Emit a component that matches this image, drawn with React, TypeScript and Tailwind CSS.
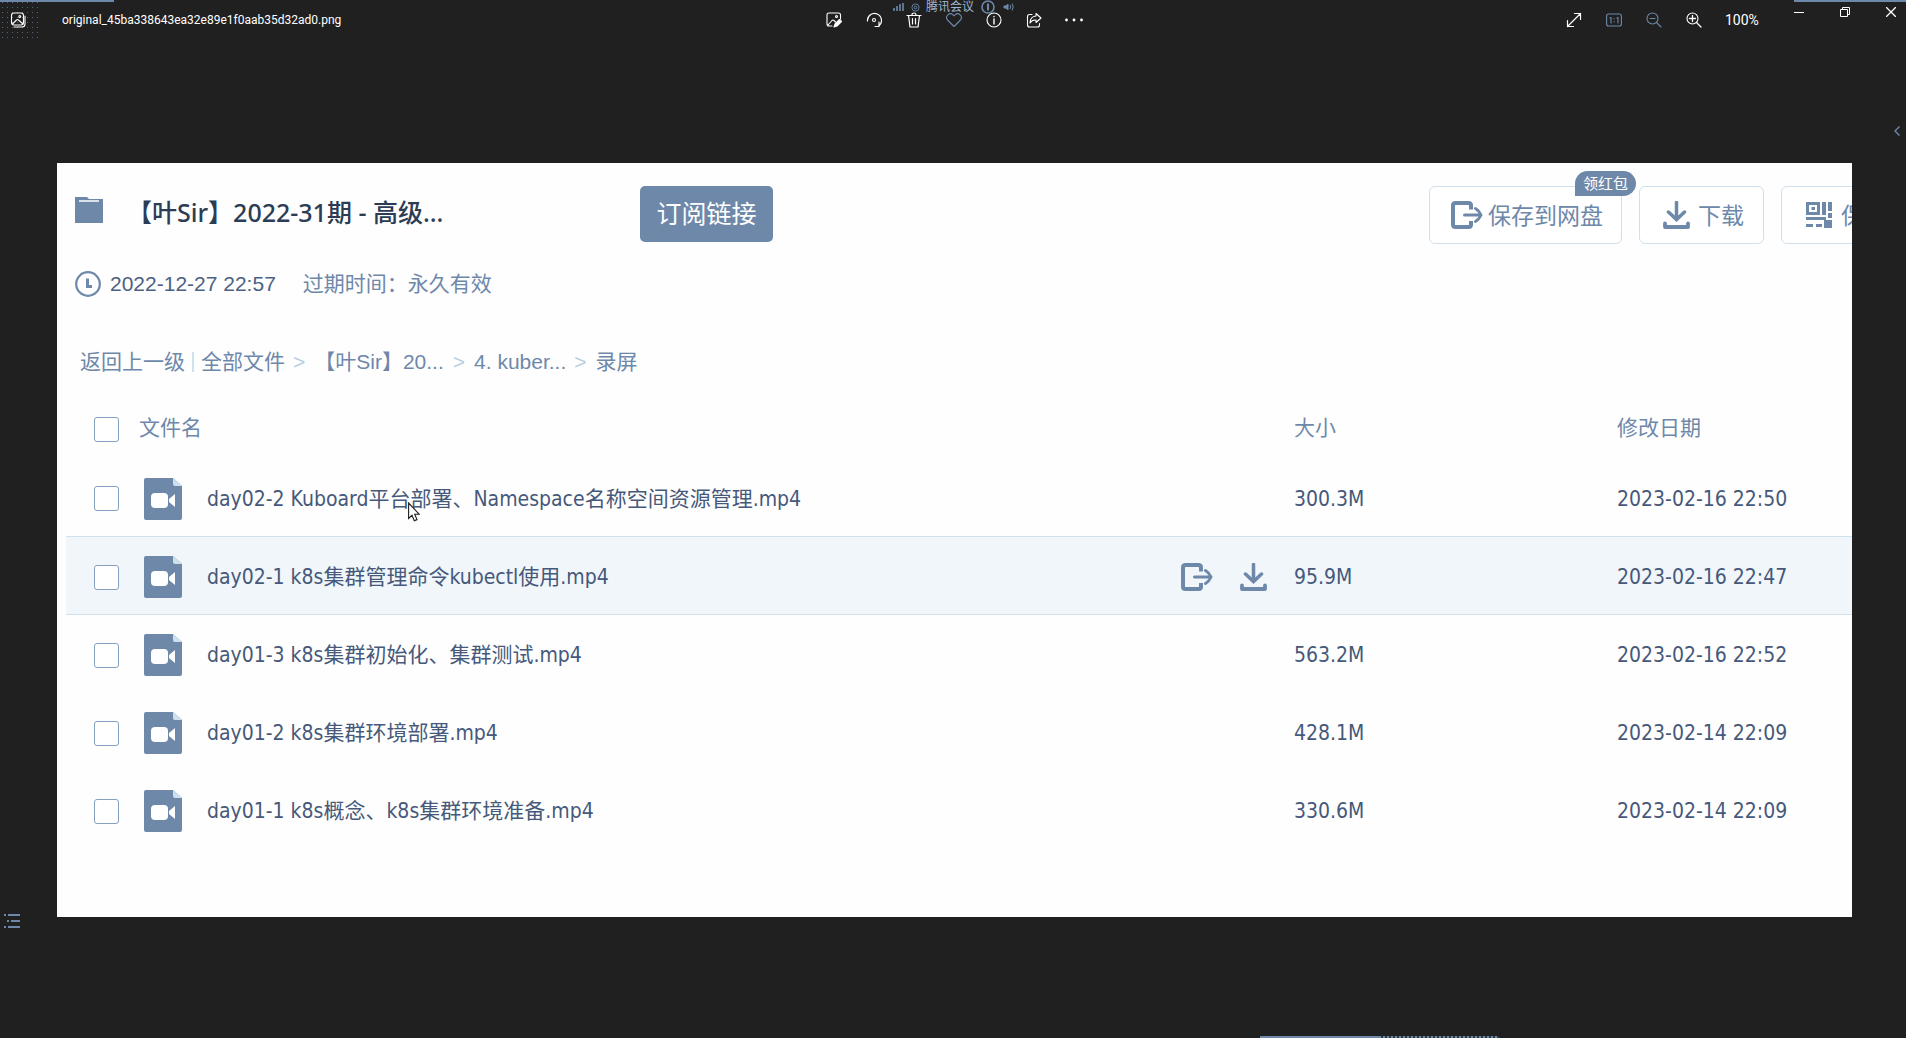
import React from "react";

const UI = "font-['Noto_Sans','Noto_Sans_CJK_SC',sans-serif]";
const ARIAL = "font-['Liberation_Sans','Noto_Sans_CJK_SC',sans-serif]";
const TABLE = "font-['DejaVu_Sans_Condensed','Noto_Sans_CJK_SC',sans-serif]";
const BAR = "font-['Roboto','Noto_Sans_CJK_SC',sans-serif]";

const files = [
  { name: "day02-2 Kuboard平台部署、Namespace名称空间资源管理.mp4", size: "300.3M", date: "2023-02-16 22:50", active: false },
  { name: "day02-1 k8s集群管理命令kubectl使用.mp4", size: "95.9M", date: "2023-02-16 22:47", active: true },
  { name: "day01-3 k8s集群初始化、集群测试.mp4", size: "563.2M", date: "2023-02-16 22:52", active: false },
  { name: "day01-2 k8s集群环境部署.mp4", size: "428.1M", date: "2023-02-14 22:09", active: false },
  { name: "day01-1 k8s概念、k8s集群环境准备.mp4", size: "330.6M", date: "2023-02-14 22:09", active: false },
];

function Line({ children, className = "size-4" }: { children: React.ReactNode; className?: string }) {
  return (
    <svg viewBox="0 0 16 16" fill="none" stroke="currentColor" strokeWidth="1.1" strokeLinecap="round" strokeLinejoin="round" className={className}>
      {children}
    </svg>
  );
}

function ToolButton({ label, dim, children }: { label: string; dim?: boolean; children: React.ReactNode }) {
  return (
    <button aria-label={label} className={`flex h-10 w-10 items-center justify-center ${dim ? "text-[#6e88aa]" : "text-white"}`}>
      {children}
    </button>
  );
}

function SaveIcon({ className }: { className: string }) {
  return (
    <svg viewBox="0 0 32 28" fill="none" stroke="currentColor" className={className}>
      <path d="M20 8.500V4.500Q20 2 17.500 2H4.500Q2 2 2 4.500V23.500Q2 26 4.500 26H17.500Q20 26 20 23.500V20" strokeWidth="4" />
      <path d="M13.500 14H29" strokeWidth="3" strokeLinecap="round" />
      <path d="M24.500 7.500Q28 9.500 30 14Q28 18.500 24.500 20.500" strokeWidth="3" strokeLinecap="round" />
    </svg>
  );
}

function DownloadIcon({ className }: { className: string }) {
  return (
    <svg viewBox="0 0 27 28" fill="none" stroke="currentColor" className={className}>
      <path d="M13.500 1.500V18M5.500 11L13.500 18.500L21.500 11" strokeWidth="3.500" strokeLinecap="round" />
      <path d="M2 22.500V26H25V22.500" strokeWidth="3.800" strokeLinecap="round" strokeLinejoin="round" />
    </svg>
  );
}

function QrIcon() {
  return (
    <svg viewBox="0 0 26 26" fill="currentColor" className="size-[26px] shrink-0">
      <path fillRule="evenodd" d="M0 0H14V13H0ZM3 3V10H11V3ZM5.500 5H9V8H5.500Z" />
      <path d="M16 0H20V13H16ZM22 0H26V9H22ZM22 11H26V16H22ZM0 15H16V18H0ZM0 22H7V25H0ZM10 22H16V25H10ZM18 18H26V26H18ZM16 15H20V18H16Z" />
    </svg>
  );
}

function VideoFileIcon() {
  return (
    <svg viewBox="0 0 38 42" className="h-[42px] w-[38px] shrink-0">
      <path d="M2 0H29L38 8V40Q38 42 36 42H2Q0 42 0 40V2Q0 0 2 0Z" fill="#6e88aa" />
      <path d="M29 0L38 8H31Q29 8 29 6Z" fill="#cfe1ec" />
      <rect x="7" y="15" width="17" height="15" rx="4" fill="#fff" />
      <path d="M25 21L31 16V29L25 24Z" fill="#fff" />
    </svg>
  );
}

function Check({ label }: { label: string }) {
  return (
    <input
      type="checkbox"
      aria-label={label}
      className="size-[25px] shrink-0 appearance-none rounded-[3px] border border-[#86a0c0] bg-white"
    />
  );
}

function TitleBar() {
  return (
    <header className={`relative grid h-10 shrink-0 grid-cols-[1fr_auto_1fr] text-white ${BAR}`}>
      <div className="flex items-center">
        <span className="flex h-10 w-[42px] shrink-0 items-center bg-[radial-gradient(#536680_0.7px,transparent_0.8px)] bg-[size:5px_5px] pl-[10px]">
          <Line>
            <rect x="1.500" y="1" width="12" height="12" rx="2.500" />
            <path d="M4 15H12Q15 15 15 12V4M2.500 12L6.500 8Q7.500 7 8.500 8L13 12" />
            <circle cx="9.800" cy="4.500" r="1" />
          </Line>
        </span>
        <span className="pl-5 text-[12px] leading-5">original_45ba338643ea32e89e1f0aab35d32ad0.png</span>
      </div>
      <nav aria-label="图片操作" className="flex pl-[2px]">
        <ToolButton label="编辑图像">
          <Line>
            <path d="M14.500 7V3Q14.500 1 12.500 1H3Q1 1 1 3V12Q1 14 3 14H6M2 13L6 8.500Q7 7.500 8 8.500L9.500 10" />
            <circle cx="10.500" cy="4.500" r="1" />
            <path d="M8 15L9 12L13.500 7.500L15.500 9.500L11 14Z" fill="currentColor" />
          </Line>
        </ToolButton>
        <ToolButton label="旋转">
          <Line>
            <path d="M1 9A7 7 0 1 1 12.500 13.800M12.500 10V14.500H8.500" strokeWidth="1.200" transform="translate(0.500 0)" />
            <circle cx="8" cy="8" r="1.500" />
          </Line>
        </ToolButton>
        <ToolButton label="删除">
          <Line>
            <path d="M1 3.500H15M2.500 3.500L4 15H12L13.500 3.500M6 3Q6 1 8 1Q10 1 10 3M6.500 6.500V12M9.500 6.500V12" strokeWidth="1.200" />
          </Line>
        </ToolButton>
        <ToolButton label="收藏" dim>
          <Line>
            <path d="M8 14.500L1.500 8A3.800 3.800 0 0 1 7 2.800L8 3.800L9 2.800A3.800 3.800 0 0 1 14.500 8Z" />
          </Line>
        </ToolButton>
        <ToolButton label="信息">
          <Line>
            <circle cx="8" cy="8" r="7" />
            <path d="M8 7V12M8 4.500V4.700" strokeWidth="1.400" />
          </Line>
        </ToolButton>
        <ToolButton label="共享">
          <Line>
            <path d="M6 2.500H3.500Q1.500 2.500 1.500 4.500V13Q1.500 15 3.500 15H11.500Q13.500 15 13.500 13V11.500" />
            <path d="M10 1.500L15 6L10 10.500V8Q6 7.500 4 11Q4.200 4.500 10 4Z" />
          </Line>
        </ToolButton>
        <ToolButton label="更多">
          <svg viewBox="0 0 18 4" fill="currentColor" className="h-1 w-[18px]">
            <circle cx="1.500" cy="2" r="1.400" />
            <circle cx="9" cy="2" r="1.400" />
            <circle cx="16.500" cy="2" r="1.400" />
          </svg>
        </ToolButton>
      </nav>
      <div className="flex justify-end">
        <ToolButton label="全屏">
          <Line>
            <path d="M1.500 14.500L14.500 1.500M8.500 1.500H14.500V7.500M1.500 8.500V14.500H7.500" strokeWidth="1.200" />
          </Line>
        </ToolButton>
        <ToolButton label="实际大小" dim>
          <Line>
            <rect x="0.600" y="2" width="14.800" height="12" rx="2" />
            <path d="M4 6L5 5.500V11M11 6L12 5.500V11M8 6.500V6.700M8 9.500V9.700" />
          </Line>
        </ToolButton>
        <ToolButton label="缩小" dim>
          <Line>
            <circle cx="6.500" cy="6.500" r="5.500" />
            <path d="M4 6.500H9M10.500 10.500L15 15" />
          </Line>
        </ToolButton>
        <ToolButton label="放大">
          <Line>
            <circle cx="6.500" cy="6.500" r="5.500" />
            <path d="M3.500 6.500H9.500M6.500 3.500V9.500M10.500 10.500L15 15" strokeWidth="1.300" />
          </Line>
        </ToolButton>
        <span className="w-[62px] pl-[11px] text-[14px] leading-10">100%</span>
        <div className="flex h-6 w-[130px] justify-between pl-[18px] pr-[10px]">
          <button aria-label="最小化" className="flex items-center">
            <span className="h-px w-[10px] bg-white" />
          </button>
          <button aria-label="还原" className="flex items-center">
            <svg viewBox="0 0 10 10" fill="none" stroke="currentColor" className="size-[10px]">
              <path d="M0.500 2.500H7.500V9.500H0.500ZM2.500 2.500V0.500H9.500V7.500H7.500" />
            </svg>
          </button>
          <button aria-label="关闭" className="flex items-center">
            <svg viewBox="0 0 10 10" fill="none" stroke="currentColor" strokeWidth="1.300" className="size-[10px]">
              <path d="M0 0L10 10M10 0L0 10" />
            </svg>
          </button>
        </div>
      </div>
      <div className="absolute left-0 top-0 h-[2px] w-[114px] bg-[#6e88aa]" />
      <div className="absolute right-0 top-0 h-[2px] w-28 bg-[#6e88aa]" />
      <div className="absolute inset-x-0 top-0 flex h-[14px] items-center justify-center pl-[2px] text-[#6e88aa]">
        <svg viewBox="0 0 11 10" fill="currentColor" className="h-[10px] w-[11px]">
          <path d="M0 6H2V9H0ZM3 4H5V9H3ZM6 2H8V9H6ZM9 1H11V9H9Z" opacity="0.800" />
        </svg>
        <svg viewBox="0 0 10 10" fill="none" stroke="currentColor" className="ml-[7px] size-[9px]">
          <circle cx="5" cy="5" r="4" />
          <circle cx="5" cy="5" r="1.500" />
        </svg>
        <span className="ml-[6px] whitespace-nowrap text-[12px] leading-[14px] text-[#9fb6d2]">腾讯会议</span>
        <svg viewBox="0 0 14 14" fill="none" stroke="currentColor" className="ml-[7px] size-[14px] shrink-0">
          <circle cx="7" cy="7" r="6" strokeWidth="1.600" />
          <path d="M7 3.500V10.500" strokeWidth="2" />
        </svg>
        <svg viewBox="0 0 12 10" fill="currentColor" stroke="currentColor" className="ml-[8px] h-[10px] w-3 shrink-0">
          <path d="M1 4H3L5 2V8L3 6H1Z" />
          <path d="M7 3Q8.500 5 7 7M9 1.500Q11.500 5 9 8.500" fill="none" />
        </svg>
      </div>
    </header>
  );
}

function ShareHeader() {
  const outlined = "flex h-[58px] shrink-0 items-center rounded-[6px] border border-[#cfe1ec] bg-white text-[23px] leading-8 text-[#6e88aa]";
  return (
    <div className="flex items-start pl-[18px] pt-[23px]">
      <svg viewBox="0 0 28 26" className="mt-[11px] h-[26px] w-7 shrink-0">
        <path d="M0 0H12L14 2H28V26H0Z" fill="#6e88aa" />
        <path d="M4 4H24" stroke="#fff" strokeWidth="1.500" />
      </svg>
      <h1 className="ml-6 w-[513px] shrink-0 text-[25px] leading-[52px] font-medium text-[#2c3c54]">【叶Sir】2022-31期 - 高级...</h1>
      <button className="h-14 w-[133px] shrink-0 rounded-[5px] bg-[#6e88aa] text-[25px] text-white">订阅链接</button>
      <div className="-mr-[110px] ml-auto flex shrink-0 gap-[17px]">
        <div className="relative">
          <button className={`${outlined} w-[193px] justify-center gap-[5px] pl-[3px]`}>
            <SaveIcon className="h-7 w-8 shrink-0" />
            保存到网盘
          </button>
          <span className="absolute -right-[14px] -top-[15px] flex h-[25px] w-[61px] items-center justify-center rounded-full rounded-bl-none bg-[#6e88aa] text-[15px] text-white">
            领红包
          </span>
        </div>
        <button className={`${outlined} w-[125px] justify-center gap-2 pl-1`}>
          <DownloadIcon className="h-7 w-[27px] shrink-0" />
          下载
        </button>
        <button className={`${outlined} w-[181px] gap-[9px] pl-6`}>
          <QrIcon />
          保存到手机
        </button>
      </div>
    </div>
  );
}

function Breadcrumb() {
  const sep = <span className="text-[#b4cfe2]">&gt;</span>;
  return (
    <nav aria-label="路径" className={`mt-[46px] flex items-center pl-[23px] text-[21px] leading-8 text-[#6e88aa] ${ARIAL}`}>
      <a href="#up">返回上一级</a>
      <span className="ml-[7px] mr-[7px] h-5 w-[2px] bg-[#cfe1ec]" />
      <a href="#all" className="mr-[8px]">全部文件</a>
      {sep}
      <a href="#course" className="ml-[9px] mr-[9px]">【叶Sir】20...</a>
      {sep}
      <a href="#kuber" className="ml-[9px] mr-[8px]">4. kuber...</a>
      {sep}
      <span className="ml-[9px]">录屏</span>
    </nav>
  );
}

function FileTable() {
  return (
    <table className={`ml-[9px] mt-[11px] w-[calc(100%-9px)] table-fixed border-collapse text-left text-[21px] leading-8 ${TABLE}`}>
      <colgroup>
        <col />
        <col className="w-[323px]" />
        <col className="w-[235px]" />
      </colgroup>
      <thead>
        <tr className="h-[69px] text-[#6e88aa]">
          <th className="pt-2 font-normal">
            <div className="flex items-center pl-7">
              <span className="flex pt-1">
                <Check label="全选" />
              </span>
              <span className="ml-5">文件名</span>
            </div>
          </th>
          <th className="pt-2 font-normal">大小</th>
          <th className="pt-2 font-normal">修改日期</th>
        </tr>
      </thead>
      <tbody>
        {files.map((f) => (
          <tr
            key={f.name}
            className={`h-[78px] text-[#46597a] ${f.active ? "border-y border-[#cfe1ec] bg-[#f0f6fa]" : ""}`}
          >
            <td className="pt-1">
              <div className="flex items-center pl-7">
                <Check label={f.name} />
                <span className="w-[25px] shrink-0" />
                <VideoFileIcon />
                <a href="#file" className="ml-[25px] whitespace-nowrap">{f.name}</a>
                {f.active && (
                  <span className="ml-auto flex gap-[27px] pr-[27px] text-[#6e88aa]">
                    <button aria-label="保存到网盘"><SaveIcon className="h-7 w-8" /></button>
                    <button aria-label="下载"><DownloadIcon className="h-7 w-[27px]" /></button>
                  </span>
                )}
              </div>
            </td>
            <td className="pt-1">{f.size}</td>
            <td className="pt-1">{f.date}</td>
          </tr>
        ))}
      </tbody>
    </table>
  );
}

export default function App() {
  return (
    <div className={`relative flex min-h-screen flex-col overflow-hidden bg-[#202020] ${UI}`}>
      <TitleBar />
      <main className="relative mt-[123px] ml-[57px] mr-[54px] overflow-hidden bg-[#fefefe] pb-[69px]">
        <ShareHeader />
        <div className={`mt-[24px] flex items-center pl-[18px] text-[21px] leading-8 text-[#6e88aa] ${ARIAL}`}>
          <svg viewBox="0 0 26 26" fill="none" stroke="currentColor" className="size-[26px]">
            <circle cx="13" cy="13" r="11.800" strokeWidth="2.200" />
            <path d="M12.500 7.500V15.500H17" strokeWidth="3" />
          </svg>
          <time className="ml-[9px] text-[#4c6182]">2022-12-27 22:57</time>
          <span className="ml-[27px]">过期时间：永久有效</span>
        </div>
        <Breadcrumb />
        <FileTable />
        <svg viewBox="0 0 12 20" className="pointer-events-none absolute left-[351px] top-[339px] h-5 w-3">
          <path d="M0.600 1V16.500L4 13.300L6.300 18.800L9 17.600L6.700 12.300H11.300Z" fill="#fff" stroke="#202020" strokeWidth="1.100" />
        </svg>
      </main>
      <button aria-label="展开" className="absolute right-[6px] top-[126px] text-[#6e88aa]">
        <svg viewBox="0 0 6 10" fill="none" stroke="currentColor" strokeWidth="1.400" className="h-[10px] w-[6px]">
          <path d="M5.500 0.500L1 5L5.500 9.500" />
        </svg>
      </button>
      <button aria-label="列表" className="absolute bottom-[109px] left-1 text-[#6e88aa]">
        <svg viewBox="0 0 16 15" fill="currentColor" className="h-[15px] w-4">
          <path d="M0 0H2V2H0ZM4 0H16V2H4ZM3 6H5V8H3ZM7 6H16V8H7ZM0 12H2V14H0ZM4 12H16V14H4Z" />
        </svg>
      </button>
      <div className="absolute bottom-0 right-[407px] flex h-[2px] w-[239px]">
        <span className="w-[119px] bg-[#6e88aa]" />
        <span className="flex-1 bg-[repeating-linear-gradient(90deg,#6e88aa_0_2px,#303844_2px_4px)]" />
      </div>
    </div>
  );
}
